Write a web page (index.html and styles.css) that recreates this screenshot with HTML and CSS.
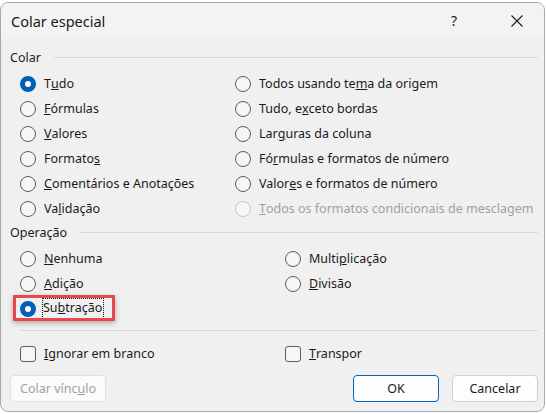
FILE: index.html
```html
<!DOCTYPE html>
<html lang="pt">

<head>
  <meta charset="UTF-8">
  <title>Colar especial</title>
  <link rel="stylesheet" href="styles.css">
</head>

<body>
  <div class="dialog">
    <!-- Title bar -->
    <div class="titlebar">
      <span class="title">Colar especial</span>
      <span class="help">?</span>
      <span class="close">
        <svg width="12" height="12" viewBox="0 0 12 12">
          <path d="M0.5 0.5 L11.5 11.5 M11.5 0.5 L0.5 11.5" stroke="#1a1a1a" stroke-width="1.1" fill="none" />
        </svg>
      </span>
    </div>

    <div class="content">
      <!-- Colar group -->
      <div class="group-label"><span>Colar</span><span class="rule"></span></div>
      <div class="options paste">
        <div class="opt"><span class="radio checked"></span>T<u>u</u>do</div>
        <div class="opt"><span class="radio"></span>Todos usando te<u>m</u>a da origem</div>
        <div class="opt"><span class="radio"></span><u>F</u>órmulas</div>
        <div class="opt"><span class="radio"></span>Tudo, e<u>x</u>ceto bordas</div>
        <div class="opt"><span class="radio"></span><u>V</u>alores</div>
        <div class="opt"><span class="radio"></span>Lar<u>g</u>uras da coluna</div>
        <div class="opt"><span class="radio"></span>Formato<u>s</u></div>
        <div class="opt"><span class="radio"></span>Fó<u>r</u>mulas e formatos de número</div>
        <div class="opt"><span class="radio"></span><u>C</u>omentários e Anotações</div>
        <div class="opt"><span class="radio"></span>Valor<u>e</u>s e formatos de número</div>
        <div class="opt"><span class="radio"></span>Va<u>l</u>idação</div>
        <div class="opt disabled"><span class="radio"></span><u>T</u>odos os formatos condicionais de mesclagem</div>
      </div>

      <!-- Operação group -->
      <div class="group-label op"><span>Operação</span><span class="rule"></span></div>
      <div class="options ops">
        <div class="opt"><span class="radio"></span><u>N</u>enhuma</div>
        <div class="opt"><span class="radio"></span>Multi<u>p</u>licação</div>
        <div class="opt"><span class="radio"></span><u>A</u>dição</div>
        <div class="opt"><span class="radio"></span><u>D</u>ivisão</div>
        <div class="opt marked"><span class="radio checked"></span><span class="focus">Su<u>b</u>tração</span><span class="highlight"></span></div>
      </div>

      <div class="separator"></div>

      <div class="options ops checks">
        <div class="opt"><span class="box"></span><u>I</u>gnorar em branco</div>
        <div class="opt"><span class="box"></span><u>T</u>ranspor</div>
      </div>

      <!-- Buttons -->
      <div class="buttons">
        <button class="btn disabled">Colar vínc<u>u</u>lo</button>
        <span class="spacer"></span>
        <button class="btn primary">OK</button>
        <button class="btn">Cancelar</button>
      </div>
    </div>
  </div>
</body>

</html>
```

FILE: styles.css
```css
/* Page and dialog frame */
body {
  margin: 0;
  background-color: #ffffff;
  font-family: "Noto Sans", "Open Sans", sans-serif;
  font-size: 12.5px;
  color: #1a1a1a;
}

.dialog {
  margin-top: 2px;
  width: 545px;
  height: 410px;
  box-sizing: border-box;
  background-color: #f0f0f0;
  border: 1px solid #a8a8a8;
  border-radius: 8px;
  overflow: hidden;
}

.titlebar {
  height: 35px;
  display: flex;
  align-items: center;
  padding-left: 10px;
  background-color: #f3f3f3;
}

.title {
  font-size: 14.5px;
  flex: 1;
}

.help {
  font-size: 14px;
  width: 12px;
  margin-right: 48px;
}

.close {
  display: flex;
  margin-right: 21px;
}

.content {
  padding: 0 6px 0 9px;
}

/* Group headings with a rule after them */
.group-label {
  height: 20px;
  display: flex;
  align-items: center;
  margin-top: 9px;
  margin-bottom: 4px;
}

.group-label.op {
  margin-top: 1px;
}

.group-label .rule {
  flex: 1;
  height: 1px;
  background-color: #d9d9d9;
  margin-left: 13px;
}

/* Radio and checkbox grids */
.options {
  display: grid;
  grid-template-columns: 215px 1fr;
  padding-left: 10px;
}

.options.ops {
  grid-template-columns: 265px 1fr;
}

.opt {
  height: 25px;
  display: flex;
  align-items: center;
  white-space: nowrap;
}

.opt.disabled {
  color: #a0a0a0;
}

.radio {
  width: 14px;
  height: 14px;
  border: 1px solid #5c5c5c;
  border-radius: 50%;
  background-color: #f6f6f6;
  margin-right: 8px;
  flex: none;
}

.radio.checked {
  width: 6px;
  height: 6px;
  border: 5px solid #005fb8;
  background-color: #ffffff;
}

.opt.disabled .radio {
  border-color: #c9c9c9;
}

.box {
  width: 14px;
  height: 14px;
  border: 1px solid #5c5c5c;
  border-radius: 3px;
  background-color: #f6f6f6;
  margin-right: 8px;
  flex: none;
}

.marked {
  position: relative;
}

.focus {
  border: 1px dotted #1a1a1a;
  padding: 0 1px 1px 0;
  margin-left: -2px;
  line-height: 18px;
}

.highlight {
  position: absolute;
  left: -7px;
  top: -1px;
  width: 96px;
  height: 20px;
  border: 3px solid #e8474f;
  box-shadow: 0 2px 5px rgba(0, 0, 0, 0.3);
}

.separator {
  height: 1px;
  background-color: #d9d9d9;
  margin: 9px 0 10px 10px;
}

.checks {
  margin-bottom: 9px;
}

/* Bottom buttons */
.buttons {
  display: flex;
}

.spacer {
  flex: 1;
}

.btn {
  font-family: inherit;
  font-size: 12.5px;
  color: #1a1a1a;
  height: 27px;
  width: 86px;
  background-color: #fdfdfd;
  border: 1px solid #d0d0d0;
  border-radius: 4px;
  margin-left: 13px;
  padding: 0;
}

.btn.disabled {
  width: 96px;
  margin-left: 0;
  color: #a0a0a0;
  background-color: #fbfbfb;
  border-color: #e0e0e0;
}

.btn.primary {
  border-color: #0067c0;
}
```
